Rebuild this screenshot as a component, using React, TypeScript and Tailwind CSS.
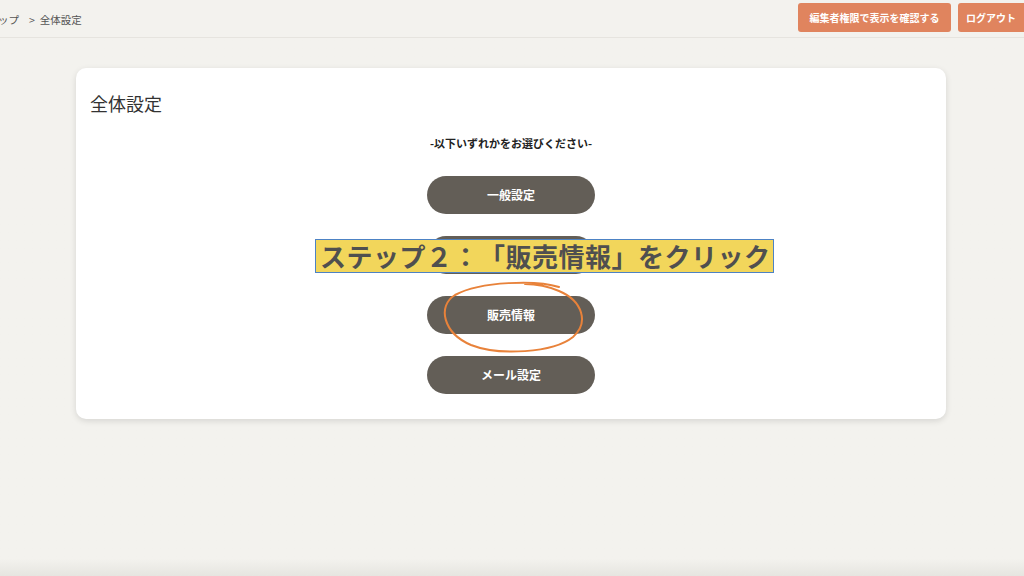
const menuItems = ['一般設定', '商品情報', '販売情報', 'メール設定']

const jp = { fontFamily: '"Noto Sans CJK JP", "Noto Sans", sans-serif' }

function Header() {
  return (
    <header className="flex h-[38px] items-center justify-between border-b border-[#e6e4df] bg-[#f3f2ee]">
      <div className="flex items-center pt-[2px] text-[10.5px] text-[#555]">
        <span className="-ml-[2px]">ップ</span>
        <span className="ml-[10px]">&gt;</span>
        <span className="ml-[5px]">全体設定</span>
      </div>
      <div className="-mr-[2px] flex items-center gap-[7px] self-start pt-[3px]">
        <button className="h-[29px] w-[153px] rounded-[3px] bg-[#e0845e] text-[10px] font-bold text-white">
          編集者権限で表示を確認する
        </button>
        <button className="h-[29px] w-[68px] rounded-[3px] bg-[#e0845e] pr-[2px] text-[10px] font-bold text-white">
          ログアウト
        </button>
      </div>
    </header>
  )
}

export default function App() {
  return (
    <div
      style={jp}
      className="flex h-[576px] w-[1024px] flex-col overflow-hidden bg-[#f3f2ee] bg-gradient-to-b from-[#f3f2ee] from-[97%] to-[#e6e5e0]"
    >
      <Header />
      <main className="flex justify-center pt-[30px] pr-[2px]">
        <section className="relative h-[351px] w-[870px] rounded-[10px] bg-white px-[14px] pt-[22px] shadow-[0_2px_6px_rgba(0,0,0,0.12)]">
          <h1 className="text-[18px] leading-[26px] text-[#333]">全体設定</h1>
          <p className="mt-[19px] text-center text-[11px] font-bold text-[#222]">
            -以下いずれかをお選びください-
          </p>
          <ul className="mt-[24px] flex flex-col items-center gap-[22px]">
            {menuItems.map((item) => (
              <li key={item}>
                <button className="h-[38px] w-[168px] rounded-full bg-[#635e57] text-[12px] font-bold text-white">
                  {item}
                </button>
              </li>
            ))}
          </ul>

          {/* annotation overlay */}
          <div className="absolute left-[239px] top-[171px] flex h-[34px] w-[459px] items-center border border-[#4d82c4] bg-[#f2d65b] pl-[4px]">
            <span className="whitespace-nowrap text-[26px] font-bold leading-none tracking-[0.5px] text-[#4f4f4f] [text-spacing-trim:space-all]">
              ステップ２：「販売情報」をクリック
            </span>
          </div>
          <svg
            className="pointer-events-none absolute left-[365px] top-[213px]"
            width="146"
            height="74"
            viewBox="0 0 146 74"
            fill="none"
          >
            <path
              d="M118 6 C 96 -1, 40 0, 14 14 C -4 25, 2 52, 30 64 C 58 75, 112 72, 132 56 C 148 42, 142 20, 118 10 C 104 4, 92 3, 84 3"
              stroke="#e8823a"
              strokeWidth="2"
              strokeLinecap="round"
            />
          </svg>
        </section>
      </main>
    </div>
  )
}
